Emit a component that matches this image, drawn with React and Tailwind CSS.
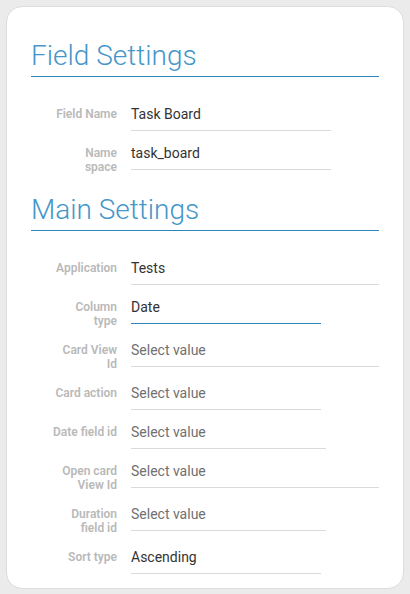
import React from "react";

const fieldRows = [
  { label: "Field Name", value: "Task Board", w: "w-[200px]" },
  { label: ["Name", "space"], value: "task_board", w: "w-[200px]" },
];

const mainRows = [
  { label: "Application", value: "Tests", w: "flex-1" },
  { label: ["Column", "type"], value: "Date", w: "w-[190px]", active: true },
  { label: ["Card View", "Id"], value: "Select value", w: "flex-1", empty: true },
  { label: "Card action", value: "Select value", w: "w-[190px]", empty: true },
  { label: "Date field id", value: "Select value", w: "w-[195px]", empty: true },
  { label: ["Open card", "View Id"], value: "Select value", w: "flex-1", empty: true },
  { label: ["Duration", "field id"], value: "Select value", w: "w-[195px]", empty: true },
  { label: "Sort type", value: "Ascending", w: "w-[190px]" },
];

const Row = ({ row }) => {
  const lines = Array.isArray(row.label) ? row.label : [row.label];
  return (
    <div className="flex items-start mb-3">
      <div className="w-[100px] shrink-0 pr-[14px] pt-[3px] text-right text-[12px] leading-[14px] font-semibold text-[#b9b9b9]">
        {lines.map((l, i) => (
          <div key={i}>{l}</div>
        ))}
      </div>
      <div
        className={`${row.w} h-[27px] pb-[6px] text-[14px] leading-[20px] border-b ${
          row.active ? "border-[#2b86bd]" : "border-[#dadada]"
        } ${row.empty ? "text-[#707070]" : "text-[#333333]"}`}
      >
        {row.value}
      </div>
    </div>
  );
};

const Heading = ({ children, className }) => (
  <div
    className={`font-['Roboto_Light','Roboto',sans-serif] text-[28px] leading-[32px] font-light text-[#4596c9] pb-1 border-b border-[#2a86bb] ${className}`}
  >
    {children}
  </div>
);

const App = () => {
  return (
    <div className="w-[410px] h-[594px] bg-[#ebebeb] p-[6px] font-['Roboto',sans-serif]">
      <div className="h-[583px] bg-white rounded-[16px] border border-[#dcdcdc] px-[24px] pt-[33px]">
        <Heading className="mb-[27px]">Field Settings</Heading>
        {fieldRows.map((r, i) => (
          <Row key={i} row={r} />
        ))}
        <Heading className="mt-[20px] mb-[27px]">Main Settings</Heading>
        {mainRows.map((r, i) => (
          <Row key={i} row={r} />
        ))}
      </div>
    </div>
  );
};

export default App;
